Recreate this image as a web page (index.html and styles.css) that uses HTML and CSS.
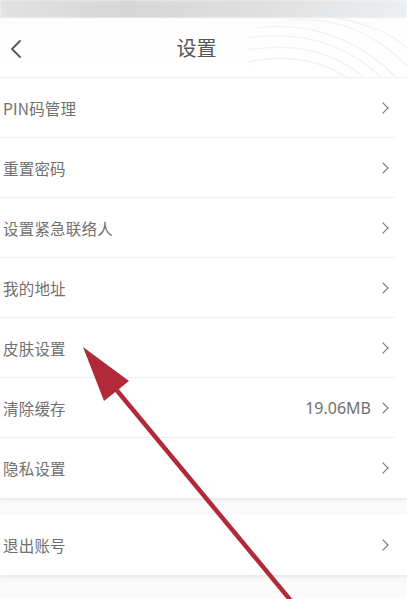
FILE: index.html
```html
<!DOCTYPE html>
<html lang="zh">
<head>
<meta charset="utf-8">
<link rel="stylesheet" href="styles.css">
</head>
<body>
<div class="screen">
  <div class="status"></div>
  <header class="topbar">
    <svg class="waves" viewBox="0 0 160 60" width="160" height="60">
      <g fill="none" stroke="#f0f3f6" stroke-width="1.5">
        <path d="M10 10 Q90 0 150 60"/>
        <path d="M0 20 Q80 8 135 60"/>
        <path d="M0 32 Q70 20 118 60"/>
        <path d="M0 44 Q60 32 100 60"/>
        <path d="M40 2 Q110 -4 160 48"/>
        <path d="M90 0 Q140 10 160 30"/>
      </g>
    </svg>
    <svg class="back" viewBox="0 0 12 20" width="12" height="20">
      <path d="M10 2 L2 10 L10 18" fill="none" stroke="#555" stroke-width="1.8" stroke-linecap="round" stroke-linejoin="round"/>
    </svg>
    <h1 class="title">设置</h1>
  </header>
  <ul class="group">
    <li class="row"><span class="label">PIN码管理</span><span class="chev"></span></li>
    <li class="row"><span class="label">重置密码</span><span class="chev"></span></li>
    <li class="row"><span class="label">设置紧急联络人</span><span class="chev"></span></li>
    <li class="row"><span class="label">我的地址</span><span class="chev"></span></li>
    <li class="row"><span class="label">皮肤设置</span><span class="chev"></span></li>
    <li class="row"><span class="label">清除缓存</span><span class="value">19.06MB</span><span class="chev"></span></li>
    <li class="row"><span class="label">隐私设置</span><span class="chev"></span></li>
  </ul>
  <ul class="group group-logout">
    <li class="row"><span class="label">退出账号</span><span class="chev"></span></li>
  </ul>
  <svg class="arrow" viewBox="0 0 407 599" width="407" height="599">
    <line x1="292" y1="602" x2="100" y2="370" stroke="#b02a3a" stroke-width="4.5" stroke-linecap="round"/>
    <polygon points="83,347 129,381 104,401" fill="#b02a3a"/>
  </svg>
</div>
</body>
</html>
```

FILE: styles.css
```css
* { box-sizing: border-box; }
html, body { margin: 0; padding: 0; }
body {
  background: #fff;
  font-family: "Noto Sans CJK SC", "Noto Sans", sans-serif;
  color: #666;
}
.screen {
  position: relative;
  width: 407px;
  height: 599px;
  overflow: hidden;
  background: #fafafa;
}
.status {
  height: 18px;
  background: linear-gradient(90deg, #e2e2e2 0%, #d6d6d6 30%, #dedede 60%, #eceef0 100%);
  filter: blur(1px);
}
.topbar {
  position: relative;
  height: 60px;
  display: flex;
  align-items: center;
  justify-content: center;
  padding-right: 14px;
  background: linear-gradient(180deg, #fdfdfd, #fff);
  border-bottom: 1px solid #f2f2f2;
}
.waves {
  position: absolute;
  right: 0;
  top: 0;
}
.back {
  position: absolute;
  left: 10px;
  top: 21px;
}
.title {
  margin: 0;
  font-size: 20px;
  font-weight: 400;
  color: #555;
  position: relative;
}
.group {
  list-style: none;
  margin: 0;
  padding: 0;
  background: #fff;
  box-shadow: 0 2px 3px rgba(0,0,0,0.08);
}
.group-logout {
  margin-top: 17px;
}
.row {
  height: 60px;
  display: flex;
  align-items: center;
  padding: 0 4px 0 3px;
  border-bottom: 1px solid #f0f0f0;
  margin-right: 12px;
}
.row:last-child { border-bottom: none; }
.label {
  flex: 1;
  font-size: 15.5px;
  color: #707070;
  letter-spacing: 0.2px;
}
.value {
  font-family: "Noto Sans", sans-serif;
  font-size: 16px;
  color: #707070;
  margin-right: 8px;
}
.chev {
  width: 8px;
  height: 8px;
  border-top: 1.5px solid #707070;
  border-right: 1.5px solid #707070;
  transform: rotate(45deg);
  margin-right: 4px;
}
.arrow {
  position: absolute;
  left: 0;
  top: 0;
  pointer-events: none;
}
```
